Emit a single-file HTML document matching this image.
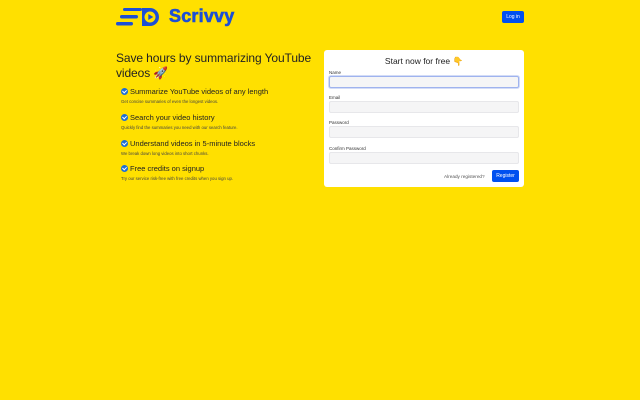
<!DOCTYPE html>
<html><head><meta charset="utf-8"><style>
*{box-sizing:border-box;margin:0;padding:0}
body{width:640px;height:400px;background:#ffe000;font-family:"Liberation Sans",sans-serif;color:#1f2937;position:relative;overflow:hidden}
.abs{position:absolute}
.logo{left:116px;top:7px}
.brand{left:169px;top:6px;font-size:18px;font-weight:bold;color:#1c4fd6;letter-spacing:0.2px;-webkit-text-stroke:0.6px #1c4fd6}
.login{left:502px;top:11px;width:22px;height:12px;background:#0050f0;color:#fff;font-size:5px;border-radius:2px;text-align:center;line-height:12px}
h1{position:absolute;left:116px;top:51px;width:210px;font-size:12px;font-weight:normal;line-height:15px;color:#222;letter-spacing:-0.1px}
.item{position:absolute;left:121px}
.item .t{font-size:7.5px;color:#222;display:flex;align-items:center;gap:2px}
.item .s{font-size:4.3px;color:#444;margin-top:3px}
.ck{width:7px;height:7px;border-radius:50%;background:#1c6ed6;display:inline-block;position:relative}
.ck:after{content:"";position:absolute;left:2px;top:1.2px;width:2px;height:3.2px;border:solid #fff;border-width:0 1px 1px 0;transform:rotate(45deg)}
.card{left:324px;top:50px;width:200px;height:137px;background:#fff;border-radius:3px}
.ct{position:absolute;left:0;width:200px;top:6px;text-align:center;font-size:8.5px;color:#222}
.lab{position:absolute;left:5px;font-size:4.5px;color:#333}
.inp{position:absolute;left:5px;width:190px;height:12px;background:#f5f5f6;border:1px solid #e7e7ea;border-radius:2px}
.foc{border:1px solid #9fb3ee;box-shadow:0 0 0 1px #d3dcf7}
.ar{position:absolute;left:120px;top:124px;font-size:4.7px;color:#555}
.reg{position:absolute;left:168px;top:120px;width:27px;height:12px;background:#0050f0;color:#fff;font-size:5px;border-radius:2px;text-align:center;line-height:12px}
</style></head><body>
<svg class="abs logo" width="46" height="20" viewBox="0 0 46 20">
<rect x="7" y="1" width="19" height="3" rx="1.5" fill="#1c4fd6"/>
<rect x="14" y="1" width="10" height="3" fill="#1c4fd6"/>
<rect x="4" y="8" width="18" height="3.5" rx="1.7" fill="#1c4fd6"/>
<rect x="0" y="15" width="17" height="3.5" rx="1.7" fill="#1c4fd6"/>
<path d="M26 1 H34 A9 9 0 0 1 34 19 H26 Z" fill="#1c4fd6"/>
<circle cx="34" cy="10" r="5.5" fill="#ffe000"/>
<path d="M32.3 7 L37.3 10 L32.3 13Z" fill="#1c4fd6"/>
</svg>
<div class="abs brand">Scrivvy</div>
<div class="abs login">Log in</div>
<h1>Save hours by summarizing YouTube videos 🚀</h1>
<div class="item" style="top:87px"><div class="t"><span class="ck"></span>Summarize YouTube videos of any length</div><div class="s">Get concise summaries of even the longest videos.</div></div>
<div class="item" style="top:113px"><div class="t"><span class="ck"></span>Search your video history</div><div class="s">Quickly find the summaries you need with our search feature.</div></div>
<div class="item" style="top:139px"><div class="t"><span class="ck"></span>Understand videos in 5-minute blocks</div><div class="s">We break down long videos into short chunks.</div></div>
<div class="item" style="top:164px"><div class="t"><span class="ck"></span>Free credits on signup</div><div class="s">Try our service risk-free with free credits when you sign up.</div></div>
<div class="abs card">
<div class="ct">Start now for free 👇</div>
<div class="lab" style="top:20px">Name</div><div class="inp foc" style="top:26px"></div>
<div class="lab" style="top:45px">Email</div><div class="inp" style="top:51px"></div>
<div class="lab" style="top:70px">Password</div><div class="inp" style="top:76px"></div>
<div class="lab" style="top:96px">Confirm Password</div><div class="inp" style="top:102px"></div>
<div class="ar">Already registered?</div>
<div class="reg">Register</div>
</div>
</body></html>
